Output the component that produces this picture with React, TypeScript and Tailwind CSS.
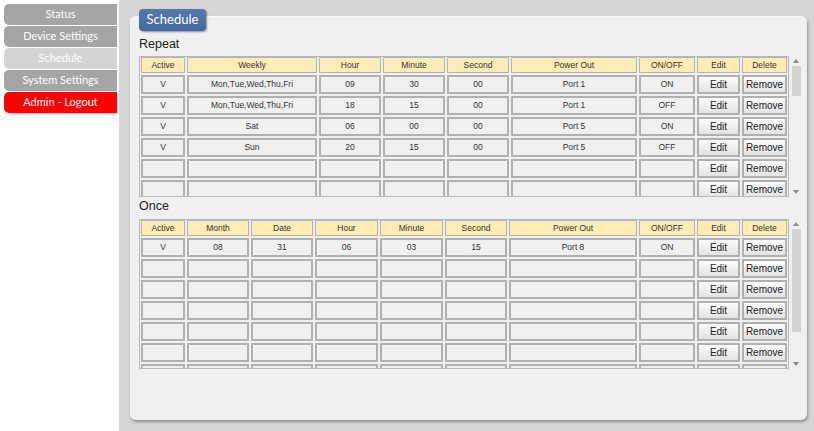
import React from 'react';

const menu = [
  { label: 'Status', cls: 'bg-[#a5a5a5] text-white' },
  { label: 'Device Settings', cls: 'bg-[#a5a5a5] text-white' },
  { label: 'Schedule', cls: 'bg-[#d4d4d4] text-white' },
  { label: 'System Settings', cls: 'bg-[#a5a5a5] text-white' },
  { label: 'Admin - Logout', cls: 'bg-[#ff0000] text-white' },
];

const repeatCols = 'grid-cols-[44px_130px_62px_62px_62px_126px_56px_43px_45px]';
const onceCols = 'grid-cols-[44px_62px_62px_63px_63px_62px_128px_56px_43px_45px]';

const repeatHead = ['Active', 'Weekly', 'Hour', 'Minute', 'Second', 'Power Out', 'ON/OFF', 'Edit', 'Delete'];
const onceHead = ['Active', 'Month', 'Date', 'Hour', 'Minute', 'Second', 'Power Out', 'ON/OFF', 'Edit', 'Delete'];

const repeatRows = [
  ['V', 'Mon,Tue,Wed,Thu,Fri', '09', '30', '00', 'Port 1', 'ON'],
  ['V', 'Mon,Tue,Wed,Thu,Fri', '18', '15', '00', 'Port 1', 'OFF'],
  ['V', 'Sat', '06', '00', '00', 'Port 5', 'ON'],
  ['V', 'Sun', '20', '15', '00', 'Port 5', 'OFF'],
  ['', '', '', '', '', '', ''],
  ['', '', '', '', '', '', ''],
];

const onceRows = [
  ['V', '08', '31', '06', '03', '15', 'Port 8', 'ON'],
  ['', '', '', '', '', '', '', ''],
  ['', '', '', '', '', '', '', ''],
  ['', '', '', '', '', '', '', ''],
  ['', '', '', '', '', '', '', ''],
  ['', '', '', '', '', '', '', ''],
];

const Arrow = ({ down }: { down?: boolean }) => (
  <svg width="6" height="4" viewBox="0 0 6 4" className="block">
    <path d={down ? 'M0 0 H6 L3 4 Z' : 'M0 4 H6 L3 0 Z'} fill="#8a8a8a" />
  </svg>
);

const cellCls = 'h-[19px] flex items-center justify-center bg-[#f0f0f0] border-2 border-[#b0b0b0] text-[8.5px] text-[#333]';
const btnCls =
  'h-[19px] flex items-center justify-center bg-gradient-to-b from-[#fbfbfb] to-[#e3e3e3] border-2 border-[#b0b0b0] text-[10px] text-[#222]';

const ScheduleTable = ({
  cols,
  head,
  rows,
  height,
  thumb,
  tail,
}: {
  cols: string;
  head: string[];
  rows: string[][];
  height: string;
  thumb: string;
  tail?: number;
}) => (
  <div className={`flex ${height}`}>
    <div className="w-[650px] h-full overflow-hidden border border-[#b8b8b8] px-[1px]">
      <div className={`grid ${cols} auto-rows-[19px] grid-rows-[16px] gap-[2px]`}>
        {head.map((h) => (
          <div
            key={h}
            className="h-[16px] flex items-center justify-center bg-[#feecb5] border border-[#b3b3b3] text-[8.5px] text-[#333]"
          >
            {h}
          </div>
        ))}
        {rows.map((r, i) => (
          <React.Fragment key={i}>
            {r.map((c, j) => (
              <div key={j} className={cellCls}>
                {c}
              </div>
            ))}
            <div className={btnCls}>Edit</div>
            <div className={btnCls}>Remove</div>
          </React.Fragment>
        ))}
        {/* partly scrolled row, only its top shows */}
        {tail
          ? Array.from({ length: tail }).map((_, k) => <div key={`t${k}`} className={cellCls} />)
          : null}
      </div>
    </div>
    <div className="w-[13px] h-full flex flex-col items-center pl-[1px]">
      <div className="h-[10px] flex items-center">
        <Arrow />
      </div>
      <div className={`w-[9px] ${thumb} bg-[#d2d2d2]`} />
      <div className="flex-1" />
      <div className="h-[10px] flex items-center">
        <Arrow down />
      </div>
    </div>
  </div>
);

export default function App() {
  return (
    <div className="flex w-[814px] h-[431px] bg-white overflow-hidden font-['Liberation_Sans',Arial,sans-serif]">
      <div className="w-[119px] shrink-0 pt-[4px] pl-[4px] pr-[2px] flex flex-col gap-[1px] font-['Lato',sans-serif]">
        {menu.map((m) => (
          <div
            key={m.label}
            className={`h-[21px] rounded-l-[5px] flex items-center justify-center text-[11px] ${m.cls}`}
          >
            {m.label}
          </div>
        ))}
      </div>
      <div className="flex-1 bg-[#d6d6d6] pt-[16px] pl-[11px]">
        <div className="w-[677px] h-[404px] bg-[#f0f0f0] rounded-[6px] border-t border-l border-[#f7f7f7] shadow-[1px_2px_3px_rgba(0,0,0,0.35)] pl-[8px]">
          <div className="-mt-[8px] w-[67px] h-[22px] rounded-[4px] bg-gradient-to-b from-[#5579ad] to-[#46699d] shadow-[1px_1px_2px_rgba(0,0,0,0.4)] flex items-center justify-center text-white text-[13px] font-['Lato',sans-serif]">
            Schedule
          </div>
          <div className="mt-[6px] h-[15px] leading-[15px] text-[12.5px] text-[#222]">Repeat</div>
          <div className="mt-[4px]">
            <ScheduleTable cols={repeatCols} head={repeatHead} rows={repeatRows} height="h-[141px]" thumb="h-[30px]" />
          </div>
          <div className="mt-[2px] h-[15px] leading-[15px] text-[12.5px] text-[#222]">Once</div>
          <div className="mt-[5px]">
            <ScheduleTable
              cols={onceCols}
              head={onceHead}
              rows={onceRows}
              height="h-[150px]"
              thumb="h-[103px]"
              tail={10}
            />
          </div>
        </div>
      </div>
    </div>
  );
}
